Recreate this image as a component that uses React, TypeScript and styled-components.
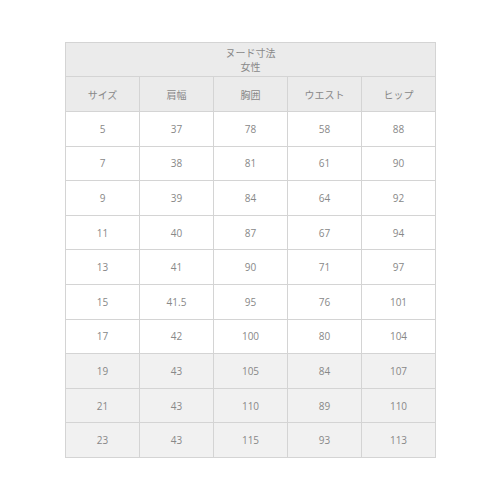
import React from 'react';
import styled, { createGlobalStyle } from 'styled-components';

const GlobalStyle = createGlobalStyle`
  html, body {
    margin: 0;
    padding: 0;
    background: #ffffff;
  }
`;

const Page = styled.div`
  width: 500px;
  height: 500px;
  padding: 42px 0 0 65px;
  box-sizing: border-box;
  font-family: 'Open Sans', 'Noto Sans CJK JP', sans-serif;
`;

const Table = styled.table`
  width: 371px;
  border-collapse: collapse;
  table-layout: fixed;
  font-size: 10px;
  color: #888888;
`;

const TitleCell = styled.th`
  background: #ebebeb;
  border: 1px solid #d4d4d4;
  height: 33px;
  padding: 0;
  font-weight: 400;
  line-height: 14px;
  font-family: 'Noto Sans CJK JP', sans-serif;
`;

const HeadCell = styled.th`
  background: #ebebeb;
  border: 1px solid #d4d4d4;
  height: 34px;
  padding: 0;
  font-weight: 400;
  font-family: 'Noto Sans CJK JP', sans-serif;
`;

const Row = styled.tr<{ $shaded: boolean }>`
  background: ${p => (p.$shaded ? '#f1f1f1' : '#ffffff')};
`;

const Cell = styled.td`
  border: 1px solid #d4d4d4;
  height: 33.6px;
  padding: 0;
  text-align: center;
`;

const headers = ['サイズ', '肩幅', '胸囲', 'ウエスト', 'ヒップ'];

const rows: string[][] = [
  ['5', '37', '78', '58', '88'],
  ['7', '38', '81', '61', '90'],
  ['9', '39', '84', '64', '92'],
  ['11', '40', '87', '67', '94'],
  ['13', '41', '90', '71', '97'],
  ['15', '41.5', '95', '76', '101'],
  ['17', '42', '100', '80', '104'],
  ['19', '43', '105', '84', '107'],
  ['21', '43', '110', '89', '110'],
  ['23', '43', '115', '93', '113'],
];

export default function App() {
  return (
    <>
      <GlobalStyle />
      <Page>
        <Table>
          <thead>
            <tr>
              <TitleCell colSpan={5}>
                ヌード寸法
                <br />
                女性
              </TitleCell>
            </tr>
            <tr>
              {headers.map(h => (
                <HeadCell key={h}>{h}</HeadCell>
              ))}
            </tr>
          </thead>
          <tbody>
            {rows.map((r, i) => (
              <Row key={r[0]} $shaded={i >= 7}>
                {r.map((v, j) => (
                  <Cell key={j}>{v}</Cell>
                ))}
              </Row>
            ))}
          </tbody>
        </Table>
      </Page>
    </>
  );
}
